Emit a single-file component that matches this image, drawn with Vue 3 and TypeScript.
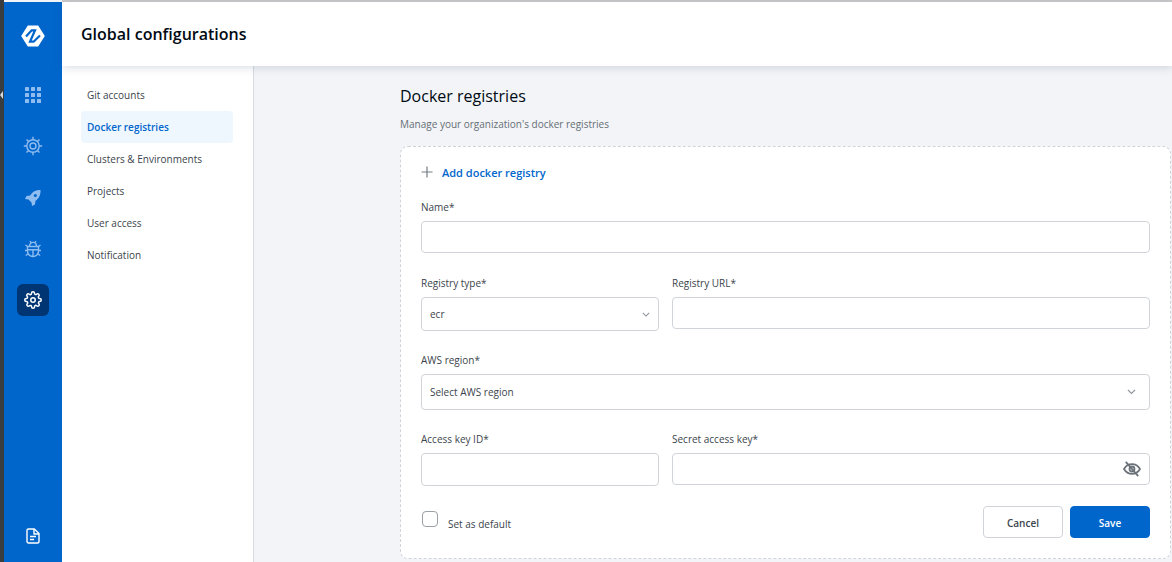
<template>
  <div class="page">
    <!-- edge of the window behind the app -->
    <div class="edge"><span class="edge-arrow"></span></div>

    <aside class="rail">
      <svg class="logo" viewBox="0 0 24 24" width="24" height="24">
        <path d="M6.800 .5h10.400L23.800 11 17.200 21.500H6.800L.2 11z" fill="#fff" />
        <path d="M5 11.500 10.700 5.300H14L9 16.700h3.600L19 10.500" fill="none" stroke="#0066cc" stroke-width="2.200" />
      </svg>

      <div class="rail-item">
        <svg viewBox="0 0 16 16" width="16" height="16" fill="#8fbdf0">
          <rect v-for="cell in gridCells" :key="cell.id" :x="cell.x" :y="cell.y" width="4" height="4" rx="0.6" />
        </svg>
      </div>

      <div class="rail-item">
        <svg viewBox="0 0 20 20" width="20" height="20" fill="none" stroke="#8fbdf0" stroke-width="1.400">
          <circle cx="10" cy="10" r="6.200" />
          <circle cx="10" cy="10" r="3" />
          <path d="M10 .8v3M10 16.200v3M.8 10h3M16.200 10h3M3.500 3.500l2.100 2.100M14.400 14.400l2.100 2.100M3.500 16.500l2.100-2.100M14.400 5.600l2.100-2.100" />
        </svg>
      </div>

      <div class="rail-item">
        <svg viewBox="0 0 18 18" width="18" height="18">
          <path d="M16.500 1c-4.800 0-8 1.700-10.300 5.500L2.500 7 1 10l3.500.5 3 3 .5 3.500 3-1.500.5-3.700C14.800 9.500 16.800 6 16.500 1z" fill="#8fbdf0" />
          <circle cx="11.300" cy="6.600" r="1.500" fill="#0066cc" />
        </svg>
      </div>

      <div class="rail-item">
        <svg viewBox="0 0 18 18" width="18" height="18" fill="none" stroke="#8fbdf0" stroke-width="1.400">
          <path d="M3.500 6.500h11v4.500a5.500 5.500 0 0 1-11 0z" />
          <path d="M5.500 6.200C5.500 3.800 7 2.400 9 2.400s3.500 1.400 3.500 3.800M3.500 9.800h11M9 9.800v6.500M1.500 5l2 1.500M16.500 5l-2 1.500M1 10.500h2.500M17 10.500h-2.500M1.800 15.500l2.400-1.700M16.200 15.500l-2.400-1.700M6 1.200l1.200 1.600M12 1.200 10.800 2.800" />
        </svg>
      </div>

      <div class="rail-item active">
        <svg viewBox="0 0 24 24" width="18" height="18" fill="none" stroke="#fff" stroke-width="2" stroke-linecap="round" stroke-linejoin="round">
          <circle cx="12" cy="12" r="3" />
          <path d="M19.400 15a1.650 1.650 0 0 0 .33 1.820l.06.06a2 2 0 1 1-2.830 2.830l-.06-.06a1.650 1.650 0 0 0-2.820 1.170V21a2 2 0 1 1-4 0v-.09a1.650 1.650 0 0 0-2.800-1.200l-.06.06a2 2 0 1 1-2.830-2.830l.06-.06a1.650 1.650 0 0 0-1.170-2.820H3a2 2 0 1 1 0-4h.09a1.650 1.650 0 0 0 1.200-2.800l-.06-.06a2 2 0 1 1 2.830-2.830l.06.06a1.650 1.650 0 0 0 2.820-1.170V3a2 2 0 1 1 4 0v.09a1.650 1.650 0 0 0 2.800 1.200l.06-.06a2 2 0 1 1 2.830 2.830l-.06.06a1.650 1.650 0 0 0 1.170 2.820H21a2 2 0 1 1 0 4h-.09a1.650 1.650 0 0 0-1.510 1.060z" />
        </svg>
      </div>

      <svg class="doc" viewBox="0 0 14 16" width="14" height="16" fill="none" stroke="#fff" stroke-width="1.400" stroke-linejoin="round">
        <path d="M2.500 1h5.800L13 5.500V13.500a1.500 1.500 0 0 1-1.500 1.500h-9A1.500 1.500 0 0 1 1 13.500v-11A1.500 1.500 0 0 1 2.500 1z" />
        <path d="M8 1v5h5M4 8.500h6M4 11.500h4" />
      </svg>
    </aside>

    <div class="main">
      <header class="topbar">Global configurations</header>

      <div class="body">
        <nav class="subnav">
          <a v-for="item in navItems" :key="item" class="subnav-item" :class="{ selected: item === 'Docker registries' }">{{ item }}</a>
        </nav>

        <section class="content">
          <h2 class="title">Docker registries</h2>
          <p class="subtitle">Manage your organization's docker registries</p>

          <form class="card" @submit.prevent>
            <div class="add-row">
              <svg viewBox="0 0 12 12" width="12" height="12" stroke="#767d84" stroke-width="1.200">
                <path d="M6 .5v11M.5 6h11" />
              </svg>
              <span>Add docker registry</span>
            </div>

            <label class="field name-field">
              <span class="label">Name*</span>
              <input class="input" type="text" />
            </label>

            <div class="row">
              <label class="field narrow">
                <span class="label">Registry type*</span>
                <div class="input select tall">
                  <span>ecr</span>
                  <svg class="chevron" viewBox="0 0 10 6" width="8" height="5"><path d="M1 1l4 4 4-4" /></svg>
                </div>
              </label>
              <label class="field grow">
                <span class="label">Registry URL*</span>
                <input class="input" type="text" />
              </label>
            </div>

            <label class="field">
              <span class="label">AWS region*</span>
              <div class="input select region">
                <span>Select AWS region</span>
                <svg class="chevron" viewBox="0 0 10 6" width="9" height="5.400"><path d="M1 1l4 4 4-4" /></svg>
              </div>
            </label>

            <div class="row">
              <label class="field narrow">
                <span class="label">Access key ID*</span>
                <input class="input key" type="text" />
              </label>
              <label class="field grow">
                <span class="label">Secret access key*</span>
                <div class="input secret">
                  <svg viewBox="0 0 20 18" width="18" height="16" fill="none" stroke="#6b7279" stroke-width="2">
                    <path d="M1 9c2-3.400 5-5.500 9-5.500s7 2.100 9 5.500c-2 3.400-5 5.500-9 5.500S3 12.400 1 9z" />
                    <circle cx="10" cy="9" r="2.800" />
                    <path d="M3 1l14 16" stroke-width="2" />
                  </svg>
                </div>
              </label>
            </div>

            <div class="actions">
              <label class="default-check">
                <span class="box"></span>
                <span class="check-text">Set as default</span>
              </label>
              <div class="buttons">
                <button class="btn cancel" type="button">Cancel</button>
                <button class="btn save" type="submit">Save</button>
              </div>
            </div>
          </form>
        </section>
      </div>
    </div>
  </div>
</template>

<script setup lang="ts">
const navItems: string[] = [
  'Git accounts',
  'Docker registries',
  'Clusters & Environments',
  'Projects',
  'User access',
  'Notification',
]

const gridCells = Array.from({ length: 9 }, (_, i) => ({
  id: i,
  x: (i % 3) * 6,
  y: Math.floor(i / 3) * 6,
}))
</script>

<style>
html,
body {
  margin: 0;
  height: 100%;
  overflow: hidden;
}
</style>

<style scoped>
.page {
  display: flex;
  width: 1172px;
  height: 562px;
  overflow: hidden;
  font-family: "Open Sans", "Liberation Sans", sans-serif;
  color: #2c3354;
  background: #f2f4f7;
}

.edge {
  width: 4px;
  flex: none;
  background: #3a3d40;
  position: relative;
}

.edge-arrow {
  position: absolute;
  left: 0;
  top: 91px;
  border-style: solid;
  border-width: 4px 3px 4px 0;
  border-color: transparent #d8d8d8 transparent transparent;
}

.rail {
  width: 58px;
  flex: none;
  margin-top: 2px;
  background: #0066cc;
  display: flex;
  flex-direction: column;
  align-items: center;
  box-sizing: border-box;
  padding-top: 23px;
}

.logo {
  margin-bottom: 30px;
}

.rail-item {
  width: 32px;
  height: 32px;
  margin-bottom: 19.250px;
  border-radius: 6px;
  display: flex;
  align-items: center;
  justify-content: center;
}

.rail-item.active {
  background: #003573;
}

.doc {
  margin-top: auto;
  margin-bottom: 18px;
}

.main {
  flex: 1;
  min-width: 0;
  display: flex;
  flex-direction: column;
  border-top: 2px solid #c9c9c9;
}

.topbar {
  height: 64px;
  flex: none;
  box-sizing: border-box;
  padding-left: 19px;
  display: flex;
  align-items: center;
  background: #fff;
  color: #000a14;
  font-size: 16px;
  font-weight: 600;
  box-shadow: 0 2px 8px rgba(60, 80, 120, 0.18);
  position: relative;
  z-index: 1;
}

.body {
  flex: 1;
  display: flex;
  min-height: 0;
}

.subnav {
  width: 192px;
  flex: none;
  box-sizing: border-box;
  padding: 13px 20px 0 19px;
  background: #fff;
  border-right: 1px solid #d6dbdf;
}

.subnav-item {
  display: flex;
  align-items: center;
  height: 32px;
  padding-left: 6px;
  padding-bottom: 1px;
  box-sizing: border-box;
  border-radius: 4px;
  font-size: 10px;
  color: #3b444c;
}

.subnav-item.selected {
  background: #eef6fe;
  color: #0066cc;
  font-weight: 600;
}

.content {
  flex: 1;
  min-width: 0;
  padding: 18px 1px 0 146px;
}

.title {
  margin: 0;
  font-size: 16px;
  line-height: 24px;
  font-weight: 400;
  color: #000a14;
}

.subtitle {
  margin: 8px 0 0;
  font-size: 10px;
  line-height: 16px;
  color: #666e75;
}

.card {
  margin-top: 14px;
  height: 413px;
  box-sizing: border-box;
  padding: 15px 20px 0;
  background: #fff;
  border: 1px dashed #d0d4d9;
  border-radius: 8px;
}

.add-row {
  display: flex;
  align-items: center;
  gap: 9px;
  height: 20px;
  margin-bottom: 17px;
  font-size: 11px;
  font-weight: 600;
  color: #0066cc;
}

.field {
  display: block;
  margin-bottom: 21px;
}

.name-field {
  margin-bottom: 22px;
}

.label {
  display: block;
  height: 16px;
  margin-bottom: 6px;
  font-size: 10px;
  line-height: 16px;
  color: #3b444c;
}

.row {
  display: flex;
  gap: 13px;
}

.narrow {
  width: 238px;
  flex: none;
}

.grow {
  flex: 1;
  min-width: 0;
}

.input {
  display: block;
  width: 100%;
  height: 32px;
  box-sizing: border-box;
  padding: 0 8px;
  background: #fff;
  border: 1px solid #d0d4d9;
  border-radius: 4px;
  font: inherit;
  font-size: 10px;
  outline: none;
}

.select {
  display: flex;
  align-items: center;
  justify-content: space-between;
  color: #3b444c;
}

.tall {
  height: 34px;
}

.key {
  height: 33px;
}

.region {
  height: 36px;
}

.chevron {
  fill: none;
  stroke: #8a9198;
  stroke-width: 1.300;
  margin-right: 5px;
}

.tall .chevron {
  margin-right: 0;
}

.secret {
  display: flex;
  align-items: center;
  justify-content: flex-end;
}

.actions {
  display: flex;
  align-items: flex-start;
  justify-content: space-between;
  margin-top: -1px;
}

.default-check {
  display: flex;
  align-items: flex-start;
  padding: 5px 0 0 1px;
}

.box {
  width: 14px;
  height: 14px;
  border: 1px solid #9aa0a6;
  border-radius: 4px;
}

.check-text {
  margin: 5px 0 0 10px;
  font-size: 10px;
  line-height: 16px;
  color: #3b444c;
}

.buttons {
  display: flex;
  gap: 7px;
}

.btn {
  width: 80px;
  height: 32px;
  border-radius: 4px;
  font: inherit;
  font-size: 10px;
  font-weight: 600;
  padding: 1px 0 0;
}

.cancel {
  background: #fff;
  border: 1px solid #d0d4d9;
  color: #3b444c;
}

.save {
  background: #0066cc;
  border: 1px solid #0066cc;
  color: #fff;
}
</style>
